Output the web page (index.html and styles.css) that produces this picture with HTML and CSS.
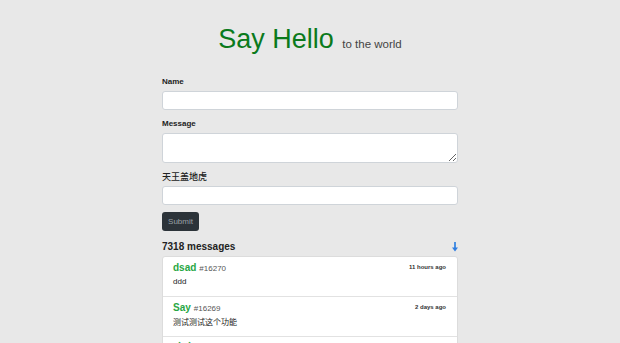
FILE: index.html
```html
<!DOCTYPE html>
<html lang="en">
<head>
    <meta charset="UTF-8">
    <title>Say Hello</title>
    <link rel="stylesheet" href="styles.css">
</head>
<body>
    <div class="container">
        <!-- Header -->
        <h1 class="title">Say Hello <small>to the world</small></h1>

        <!-- Form -->
        <form class="say-form">
            <label for="name">Name</label>
            <input type="text" id="name">

            <label for="message">Message</label>
            <textarea id="message"></textarea>

            <label for="captcha" class="cjk">天王盖地虎</label>
            <input type="text" id="captcha">

            <button type="button" class="btn-submit">Submit</button>
        </form>

        <!-- Messages -->
        <div class="list-head">
            <h5>7318 messages</h5>
            <a href="#bottom" class="to-bottom">
                <svg width="6" height="10" viewBox="0 0 6 10">
                    <rect x="2" y="0" width="2" height="6" fill="#4a90e2"/>
                    <path d="M0 5.5 H6 L3 9.5 Z" fill="#2f7de0"/>
                </svg>
            </a>
        </div>

        <div class="messages">
            <div class="item">
                <div class="item-head">
                    <span class="author">dsad</span>
                    <span class="num">#16270</span>
                    <span class="time">11 hours ago</span>
                </div>
                <p>ddd</p>
            </div>
            <div class="item">
                <div class="item-head">
                    <span class="author">Say</span>
                    <span class="num">#16269</span>
                    <span class="time">2 days ago</span>
                </div>
                <p class="cjk">测试测试这个功能</p>
            </div>
            <div class="item">
                <div class="item-head">
                    <span class="author">哈哈</span>
                    <span class="num">#16268</span>
                    <span class="time">3 days ago</span>
                </div>
                <p>hello</p>
            </div>
        </div>
    </div>
</body>
</html>
```

FILE: styles.css
```css
/* General */
body {
    margin: 0;
    background-color: #e8e8e8;
    font-family: "Liberation Sans", Arial, "Noto Sans CJK SC", sans-serif;
    color: #222;
}

.container {
    width: 296px;
    margin: 0 auto;
}

.cjk {
    font-family: "Noto Sans CJK SC", "Liberation Sans", sans-serif;
}

/* Header */
.title {
    margin: 0;
    padding-top: 24px;
    font-size: 27px;
    line-height: 31px;
    font-weight: normal;
    text-align: center;
    color: #0b7a1c;
    white-space: nowrap;
}

.title small {
    font-size: 11.5px;
    color: #444;
    margin-left: 1px;
}

/* Form */
.say-form {
    display: flex;
    flex-direction: column;
    padding-top: 16px;
}

.say-form label {
    font-size: 8px;
    font-weight: bold;
    line-height: 12px;
    margin-bottom: 3px;
}

.say-form label.cjk {
    font-weight: 500;
    font-size: 9px;
}

.say-form input,
.say-form textarea {
    box-sizing: border-box;
    width: 100%;
    margin: 0 0 8px;
    border: 1px solid #cfd4d9;
    border-radius: 3px;
    background: #fff;
    font: inherit;
    font-size: 9px;
}

.say-form input {
    height: 19px;
}

.say-form textarea {
    height: 30px;
    resize: vertical;
}

.btn-submit {
    align-self: flex-start;
    width: 37px;
    height: 19px;
    margin-top: -1px;
    padding: 0;
    border: none;
    border-radius: 3px;
    background-color: #2c3339;
    color: #9aa0a6;
    font-family: inherit;
    font-size: 8px;
}

/* Message list */
.list-head {
    display: flex;
    justify-content: space-between;
    align-items: center;
    margin-top: 9px;
}

.list-head h5 {
    margin: 0;
    font-size: 10px;
    line-height: 14px;
    font-weight: bold;
}

.to-bottom {
    display: flex;
    margin-right: 0;
}

.messages {
    margin-top: 2px;
    background: #fff;
    border: 1px solid #dcdcdc;
    border-radius: 3px;
}

.item {
    padding: 4px 11px 8px 10px;
    border-bottom: 1px solid #e2e2e2;
}

.item-head {
    display: flex;
    align-items: baseline;
    line-height: 14px;
}

.author {
    font-size: 10px;
    font-weight: bold;
    color: #28a745;
}

.num {
    margin-left: 3px;
    font-size: 8px;
    color: #555;
}

.time {
    margin-left: auto;
    font-size: 6px;
    font-weight: bold;
    color: #333;
    align-self: flex-start;
    line-height: 12px;
}

.item p {
    margin: 0;
    font-size: 8px;
    line-height: 12px;
}
```
